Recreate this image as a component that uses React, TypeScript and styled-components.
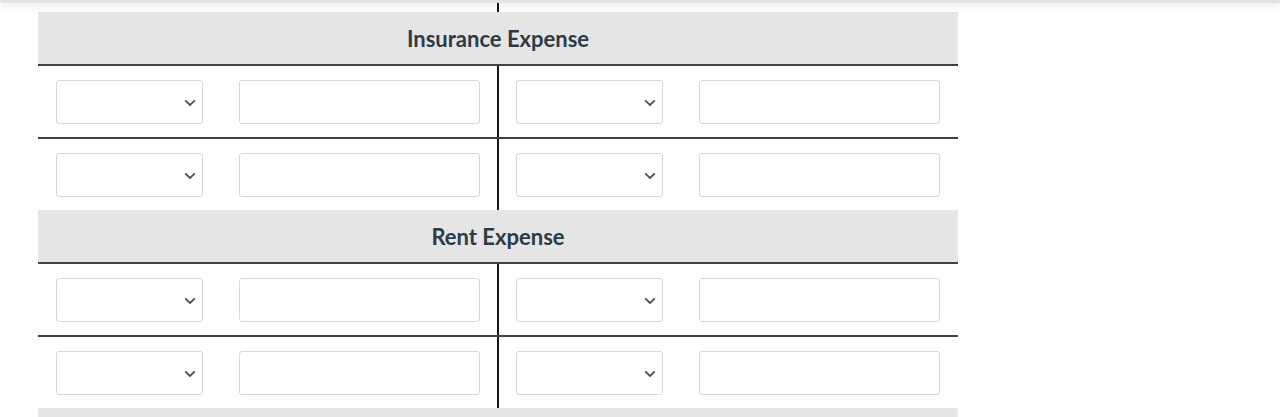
import React from "react";
import styled, { createGlobalStyle } from "styled-components";

const sections = ["Insurance Expense", "Rent Expense"];

const GlobalStyle = createGlobalStyle`
  html, body {
    margin: 0;
    padding: 0;
    background: #ffffff;
    font-family: "Lato", "Liberation Sans", sans-serif;
    overflow: hidden;
  }
`;

function Chevron() {
  return (
    <svg width="12" height="8" viewBox="0 0 12 8" aria-hidden="true">
      <path d="M1.2 1.4 L6 6 L10.8 1.4" fill="none" stroke="#4a4f55" strokeWidth="1.8" />
    </svg>
  );
}

function Entry() {
  return (
    <Cell>
      <Select>
        <Chevron />
      </Select>
      <AmountInput type="text" />
    </Cell>
  );
}

function AccountRow({ last }: { last?: boolean }) {
  return (
    <Row $last={last}>
      <Half $left>
        <Entry />
      </Half>
      <Half>
        <Entry />
      </Half>
    </Row>
  );
}

export default function App() {
  return (
    <>
      <GlobalStyle />
      <TopShade />
      <Page>
        <Spacer>
          <Half $left />
          <Half />
        </Spacer>
        {sections.map((title) => (
          <Section key={title}>
            <Header>{title}</Header>
            <AccountRow />
            <AccountRow last />
          </Section>
        ))}
        <Header />
      </Page>
    </>
  );
}

const TopShade = styled.div`
  position: fixed;
  top: 0;
  left: 0;
  right: 0;
  height: 3px;
  background: #e2e2e2;
  box-shadow: 0 2px 8px rgba(0, 0, 0, 0.18);
  border-radius: 0 0 0 8px;
  z-index: 2;
`;

const Page = styled.main`
  width: 920px;
  margin-left: 38px;
`;

const Spacer = styled.div`
  display: grid;
  grid-template-columns: 461px 459px;
  height: 12px;
`;

const Section = styled.section`
  display: flex;
  flex-direction: column;
`;

const Header = styled.div`
  display: flex;
  align-items: center;
  justify-content: center;
  height: 51px;
  padding-top: 1px;
  background: #e5e5e5;
  border-bottom: 2px solid #3c4247;
  color: #2d3b45;
  font-size: 22px;
  font-weight: 700;
`;

const Row = styled.div<{ $last?: boolean }>`
  display: grid;
  grid-template-columns: 461px 459px;
  box-sizing: border-box;
  height: ${(p) => (p.$last ? "71px" : "73px")};
  border-bottom: ${(p) => (p.$last ? "none" : "2px solid #3c4247")};
`;

const Half = styled.div<{ $left?: boolean }>`
  display: flex;
  align-items: center;
  box-sizing: border-box;
  padding: ${(p) => (p.$left ? "0 19px 0 18px" : "0 18px 0 17px")};
  border-right: ${(p) => (p.$left ? "2px solid #161616" : "none")};
`;

const Cell = styled.div`
  display: grid;
  grid-template-columns: 147px 241px;
  column-gap: 36px;
  width: 100%;
`;

const Select = styled.div`
  display: flex;
  align-items: center;
  justify-content: flex-end;
  box-sizing: border-box;
  height: 44px;
  padding-right: 6px;
  padding-top: 2px;
  background: #ffffff;
  border: 1px solid #d8d8d8;
  border-radius: 3px;
`;

const AmountInput = styled.input`
  box-sizing: border-box;
  height: 44px;
  margin: 0;
  padding: 0 10px;
  background: #ffffff;
  border: 1px solid #d8d8d8;
  border-radius: 3px;
  outline: none;
  font: inherit;
`;
